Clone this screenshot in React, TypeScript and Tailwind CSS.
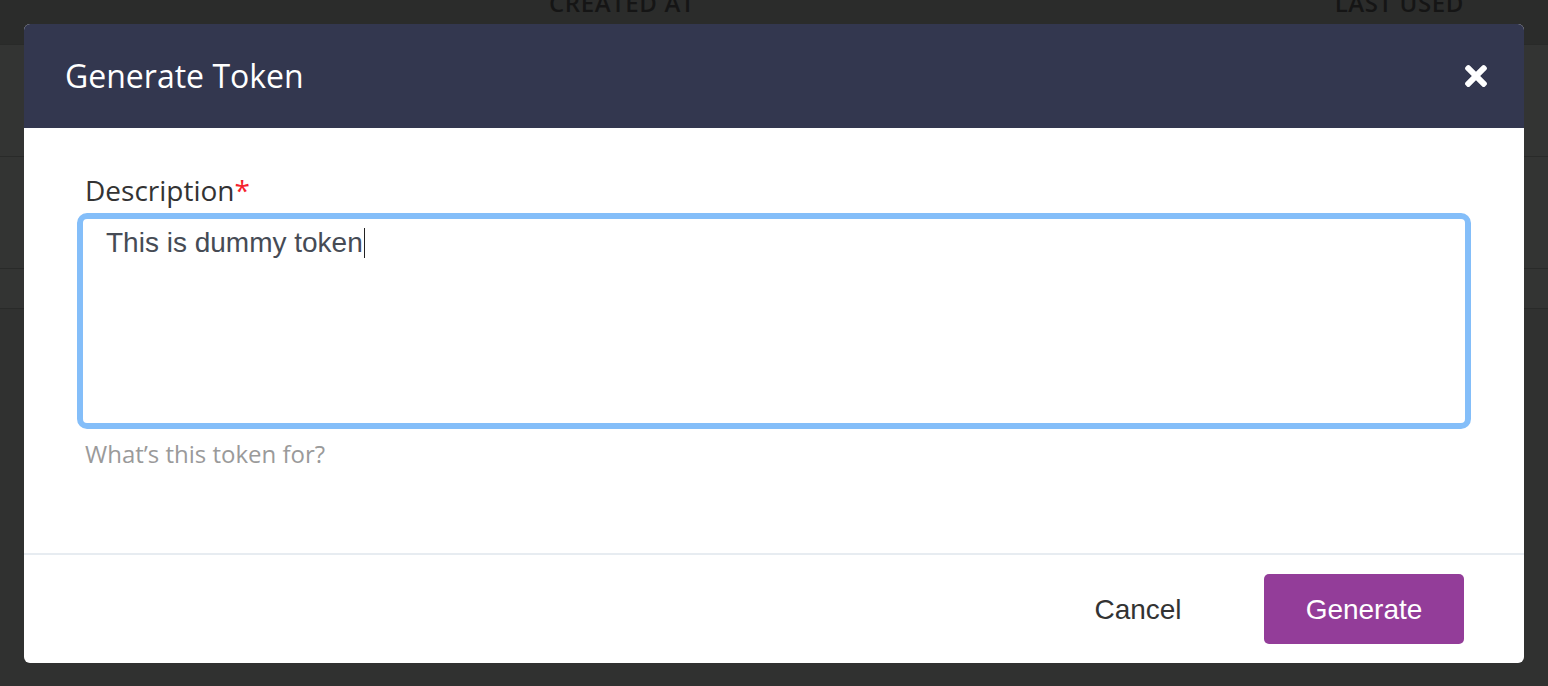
import React from "react";

const openSans = { fontFamily: '"Open Sans", "Noto Sans", sans-serif' };
const arial = { fontFamily: '"Liberation Sans", Arial, sans-serif' };

function CloseIcon() {
  // FontAwesome style "times"
  return (
    <svg viewBox="0 0 352 512" className="w-[22px] h-[32px]" fill="currentColor">
      <path d="M242.72 256l100.07-100.07c12.28-12.28 12.28-32.19 0-44.48l-22.24-22.24c-12.28-12.28-32.19-12.28-44.48 0L176 189.28 75.93 89.21c-12.28-12.28-32.19-12.28-44.48 0L9.21 111.45c-12.28 12.28-12.28 32.19 0 44.48L109.28 256 9.21 356.07c-12.28 12.28-12.28 32.19 0 44.48l22.24 22.24c12.28 12.28 32.2 12.28 44.48 0L176 322.72l100.07 100.07c12.28 12.28 32.2 12.28 44.48 0l22.24-22.24c12.28-12.28 12.28-32.19 0-44.48L242.72 256z" />
    </svg>
  );
}

function TokenTableBehind() {
  return (
    <div className="w-full" style={openSans}>
      <div className="h-[44px] bg-[#2b2c2b] flex overflow-hidden">
        <div className="w-[549px]" />
        <div className="-mt-[9px] leading-[24px] text-[24px] font-semibold text-[#151515] tracking-wide">CREATED AT</div>
        <div className="flex-1" />
        <div className="-mt-[9px] leading-[24px] text-[24px] font-semibold text-[#151515] tracking-wide mr-[84px]">LAST USED</div>
      </div>
      <div className="h-[112px] bg-[#333433] border-t border-[#292a29]" />
      <div className="h-[112px] bg-[#333433] border-t border-[#292a29]" />
      <div className="h-[41px] bg-[#333433] border-t border-[#292a29] border-b" />
    </div>
  );
}

export default function App() {
  return (
    <div className="relative h-[686px] w-full overflow-hidden bg-[#303130]">
      <TokenTableBehind />

      <div className="absolute inset-0 px-[24px] pt-[24px]">
        <div className="bg-white rounded-[6px] overflow-hidden">
          <div className="h-[104px] bg-[#33374f] flex items-center justify-between pl-[41px] pr-[37px]">
            <h2 className="text-white text-[32px] leading-[40px]" style={openSans}>
              Generate Token
            </h2>
            <button className="text-white">
              <CloseIcon />
            </button>
          </div>

          <div className="h-[425px] px-[53px] pt-[46px]">
            <label className="block pl-[8px] text-[28px] leading-[32px] text-[#333]" style={openSans}>
              Description<span className="text-[#f5222d]">*</span>
            </label>
            <div className="mt-[7px] h-[216px] rounded-[10px] border-[6px] border-[#84bef9] pl-[23px] pt-[8px]">
              <div className="text-[28px] leading-[32px] text-[#464b55] flex items-center" style={arial}>
                This is dummy token
                <span className="inline-block w-[1.5px] h-[30px] bg-[#222] ml-[1px]" />
              </div>
            </div>
            <p className="mt-[11px] pl-[8px] text-[24px] leading-[28px] text-[#9a9a9a]" style={openSans}>
              What’s this token for?
            </p>
          </div>

          <div className="border-t-2 border-[#e7ecf1] h-[110px] flex items-center justify-end gap-[26px] pr-[60px]">
            <button className="w-[200px] h-[70px] pt-[2px] text-[28px] text-[#333]" style={arial}>
              Cancel
            </button>
            <button className="w-[200px] h-[70px] pt-[2px] rounded-[5px] bg-[#933d99] text-white text-[28px]" style={arial}>
              Generate
            </button>
          </div>
        </div>
      </div>
    </div>
  );
}
